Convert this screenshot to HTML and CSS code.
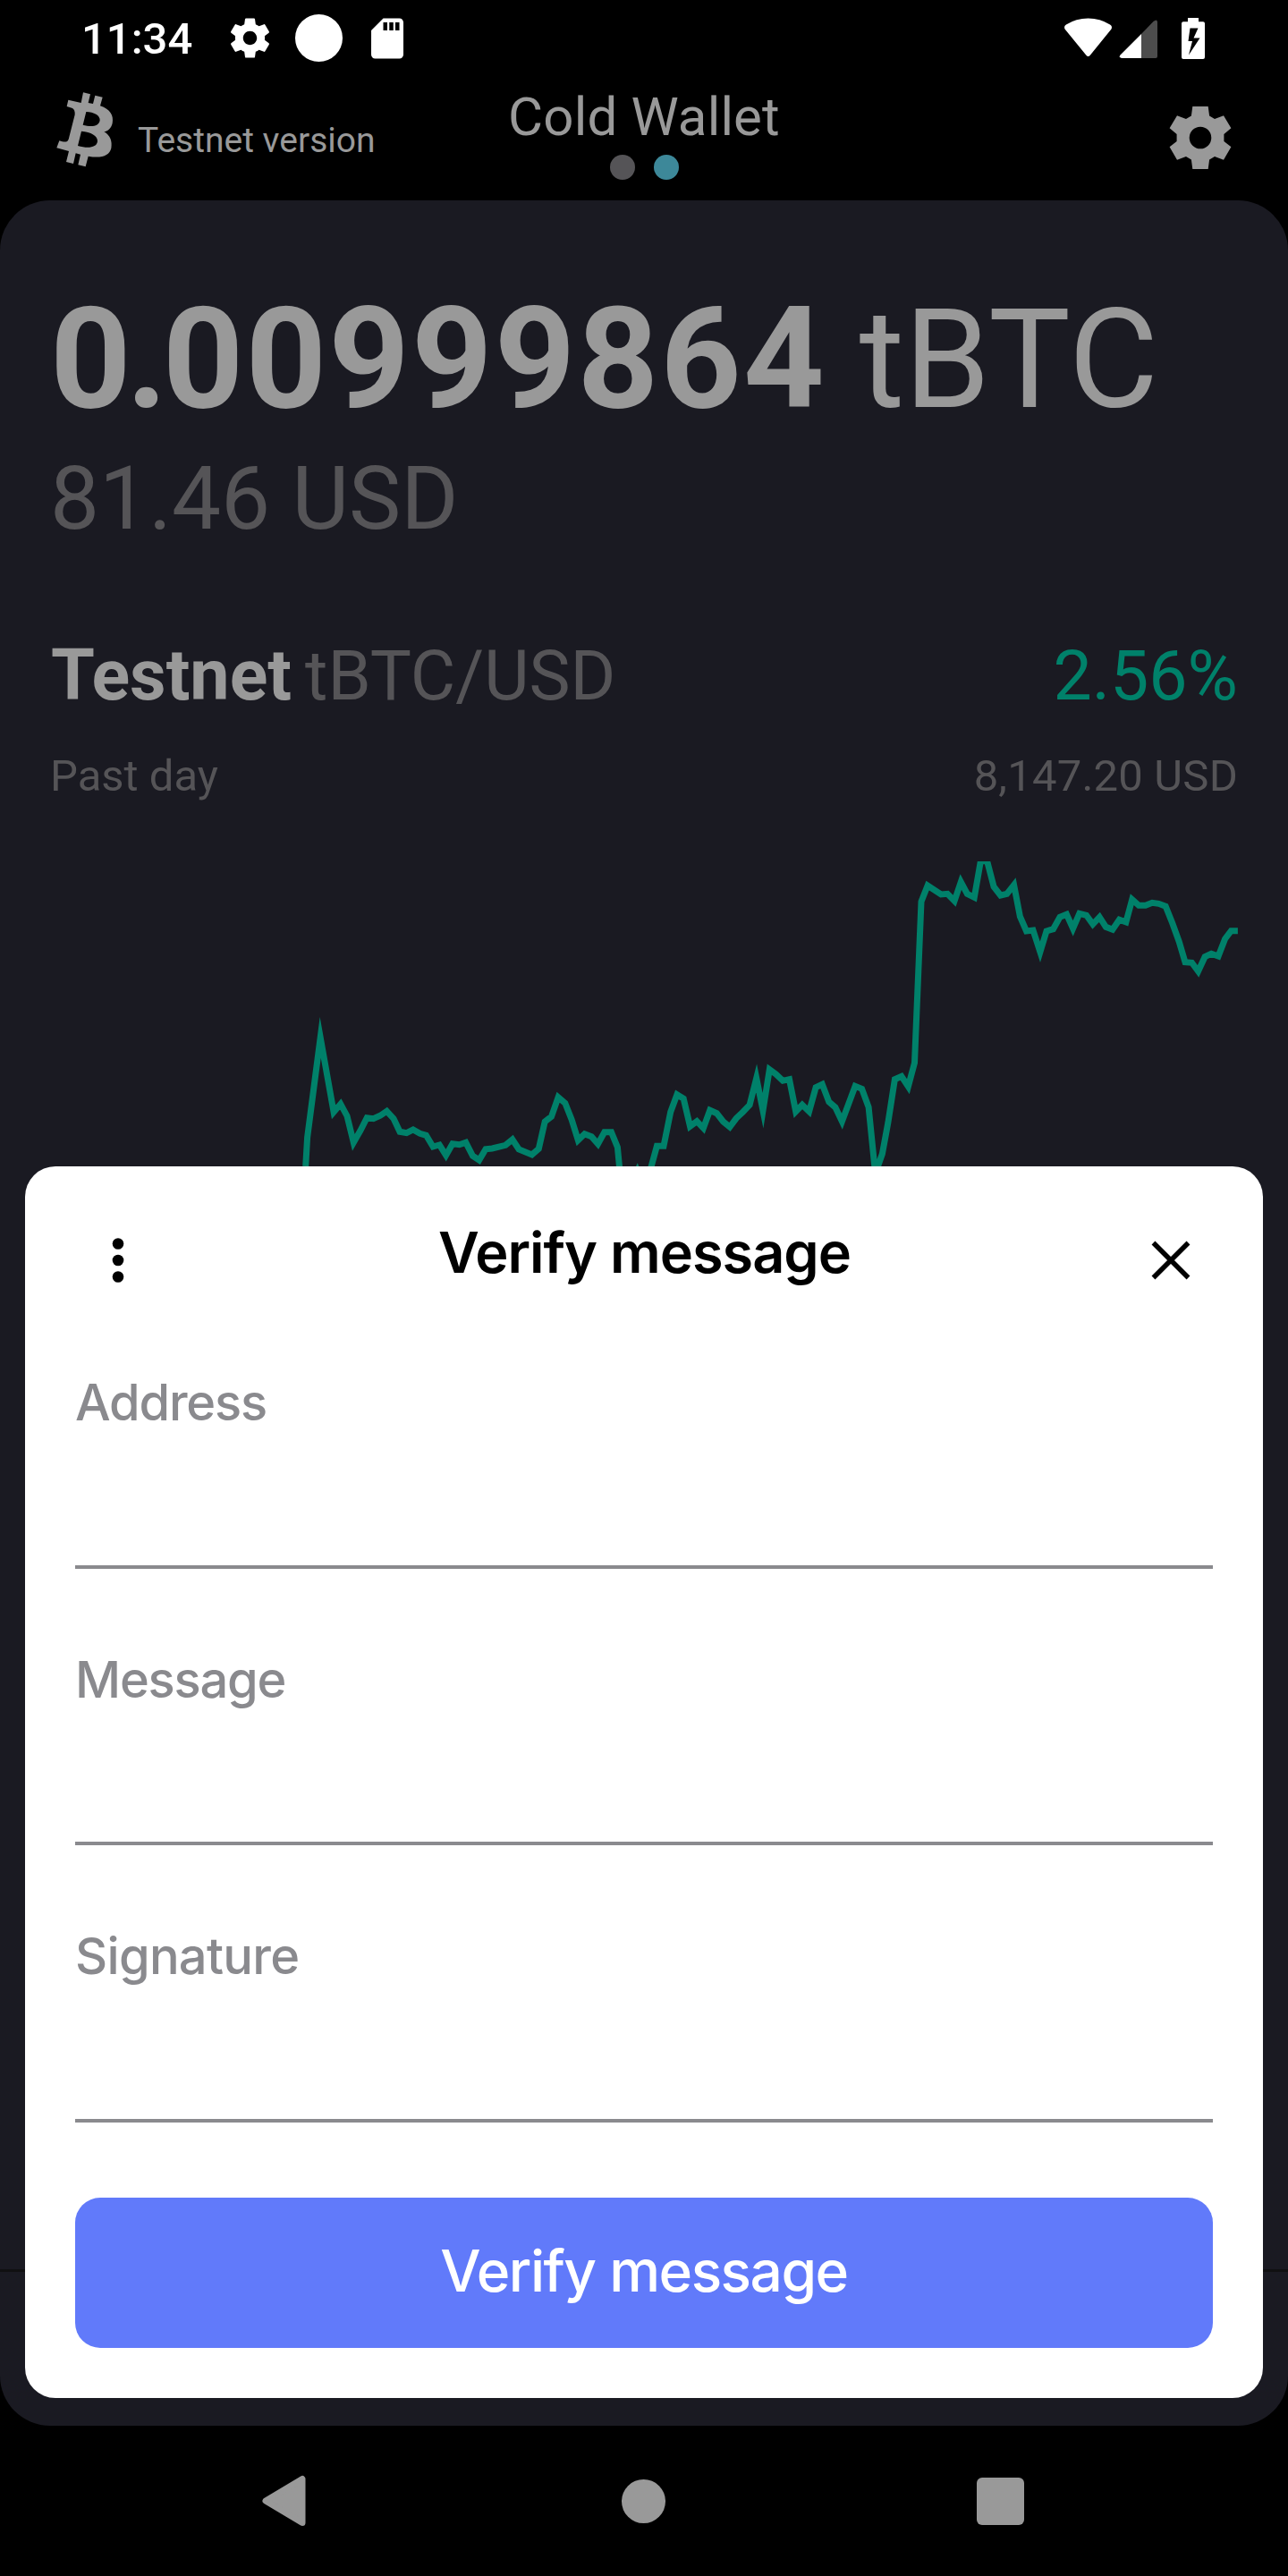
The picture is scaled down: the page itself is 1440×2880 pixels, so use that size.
FILE: index.html
```html
<!DOCTYPE html>
<html lang="en">
<head>
<meta charset="utf-8">
<title>Cold Wallet</title>
<link rel="stylesheet" href="styles.css">
</head>
<body>
<div class="screen">
  <div class="status">
    <span class="clock">11:34</span>
    <svg class="st-gear" viewBox="0 0 24 24"><path d="M19.43 12.98c.04-.32.07-.64.07-.98s-.03-.66-.07-.98l2.11-1.65c.19-.15.24-.42.12-.64l-2-3.46c-.12-.22-.39-.3-.61-.22l-2.49 1c-.52-.4-1.08-.73-1.69-.98l-.38-2.65C14.46 2.18 14.25 2 14 2h-4c-.25 0-.46.18-.49.42l-.38 2.65c-.61.25-1.17.59-1.69.98l-2.49-1c-.23-.09-.49 0-.61.22l-2 3.46c-.13.22-.07.49.12.64l2.11 1.65c-.04.32-.07.65-.07.98s.03.66.07.98l-2.11 1.65c-.19.15-.24.42-.12.64l2 3.46c.12.22.39.3.61.22l2.49-1c.52.4 1.08.73 1.69.98l.38 2.65c.03.24.24.42.49.42h4c.25 0 .46-.18.49-.42l.38-2.65c.61-.25 1.17-.59 1.69-.98l2.49 1c.23.09.49 0 .61-.22l2-3.46c.12-.22.07-.49-.12-.64l-2.11-1.65zM12 15.5c-1.93 0-3.5-1.57-3.5-3.5s1.570-3.5 3.500-3.500 3.500 1.570 3.500 3.500-1.570 3.500-3.500 3.500z"/></svg>
    <span class="st-dot"></span>
    <svg class="st-sd" viewBox="0 0 24 24"><path d="M18 2h-8L4.020 8 4 20c0 1.100.9 2 2 2h12c1.100 0 2-.9 2-2V4c0-1.100-.9-2-2-2zm-6 6h-2V4h2v4zm3 0h-2V4h2v4zm3 0h-2V4h2v4z"/></svg>
    <svg class="st-right" viewBox="1188 15 160 54">
      <path d="M1190.500 31.500Q1189 28.500 1192 26.500Q1203 19.500 1216.600 19.500Q1230 19.500 1241 26.500Q1244 28.500 1242.500 31.500L1219 60.500Q1216.600 63.500 1214.200 60.500Z"/>
      <path class="weak" d="M1276 37L1289.500 23Q1294 19.500 1294 24V62Q1294 64 1292 64H1276Z"/>
      <path d="M1276 37V64H1254Q1250.500 63.500 1252.500 60.500Z"/>
      <path fill-rule="evenodd" d="M1328 19H1340V23.300H1345Q1347 23.300 1347 25.300V63Q1347 65 1345 65H1323Q1321 65 1321 63V25.300Q1321 23.300 1323 23.300H1328ZM1330.500 30.500L1328.500 45H1333L1329 60.500L1341.500 41.500H1334.500L1339.500 30.500Z"/>
    </svg>
  </div>

  <div class="header">
    <div class="brand">
      <svg class="btc" viewBox="0 0 240 300"><path fill-rule="evenodd" d="M114 25L138 31L131 60L147 63L154 35L179 41L171 70C205 81 217 103 212 128C208 145 198 154 184 157C205 169 212 189 208 212C202 237 176 247 131 239L122 274L97 268L105 233L89 229L81 264L57 258L66 222L25 211L34 187L44 190C57 192 62 190 65 182L86 100C87 88 84 80 76 77L59 72L64 50L107 60ZM124 90L113 134C140 142 168 140 170 118C171 102 150 91 124 90ZM108 155L96 204C130 214 160 210 162 189C163 170 140 158 108 155Z"/></svg>
      <span class="network">Testnet version</span>
    </div>
    <div class="heading">
      <div class="title">Cold Wallet</div>
      <div class="pager"><i></i><i class="on"></i></div>
    </div>
    <svg class="settings" viewBox="-42 -42 84 84"><path fill-rule="evenodd" d="M-8.700-35H8.700L10.100-24.500L16-21L26-24.700L34.400-10.700L26.400-4V4L34.400 10.300L26 24.700L16 21L10.100 24.500L8.700 35H-8.700L-10.100 24.500L-16 21L-26 24.700L-34.400 10.300L-26.400 4V-4L-34.400-10.700L-26-24.700L-16-21L-10.100-24.500ZM0-12.300A12.300 12.300 0 1 0 0 12.300A12.300 12.300 0 1 0 0-12.300Z"/></svg>
  </div>

  <div class="panel">
    <div class="balance"><span class="amount"><span class="lead">0.</span>00999864</span><span class="unit">tBTC</span></div>
    <div class="fiat">81.46 USD</div>
    <div class="pair"><span class="name">Testnet</span><span class="ticker">tBTC/USD</span><span class="change">2.56%</span></div>
    <div class="sub"><span>Past day</span><span class="price">8,147.20 USD</span></div>
    <svg class="chart" viewBox="56 963 1328 380"><polyline points="338,1343 341.700,1304 343.600,1271.700 358.200,1160 373.100,1243.300 380.800,1234.300 388,1247.700 395.300,1277.300 402.900,1264 410.200,1249.700 417.500,1250.700 425.100,1247.300 432.400,1242.300 440.100,1250.700 447,1265.300 454.600,1266.700 461.900,1263 469.500,1267.300 476.400,1269.300 484.100,1282 491.300,1280 498.600,1291.700 505.900,1278.700 513.500,1279.700 520.800,1277.300 528.500,1292.300 535.700,1297 543,1284.700 550.300,1284 565.200,1280.300 572.900,1274 580.100,1285 594.700,1291 602.300,1284.300 609.200,1254 616.500,1248.300 624.100,1226.700 631.800,1233.300 639.100,1251.700 646.300,1274.700 653.600,1267.700 661.300,1270.700 668.500,1279 675.800,1265.700 683.500,1265.700 690.400,1282.700 692.700,1306.700 697,1330 705,1325 712.500,1309 720,1328 728.200,1304 734.400,1281.300 742,1281.300 749.700,1243.300 756.900,1223.700 764.200,1228.300 771.500,1259.300 779.100,1253.700 786.400,1261.300 793.700,1241.300 801.300,1244.700 808.600,1254 815.900,1260 823.100,1250.300 830.800,1243 838.100,1235.300 845.700,1205.300 853,1241.700 860.300,1195.700 867.500,1201 875.200,1208.300 882.500,1206.700 889.700,1242.700 896.900,1235.300 904.600,1242.700 912.100,1215.700 919.300,1212.300 926.800,1232 933.900,1238 941.400,1253.700 956.100,1214.300 963.600,1217.300 971.100,1237.700 978.600,1312 986.400,1290 992.900,1255 1000.400,1206.700 1007.900,1203.300 1015.400,1214.700 1022.500,1188.300 1030,1008 1037.100,990 1052.100,1000 1059.300,999.300 1067.100,1007.300 1074.300,986 1081.400,999.300 1089.300,1003.300 1096.400,962.700 1103.600,962.700 1111.100,991.300 1118.600,1001 1125.700,999.300 1133.600,989.300 1140.400,1024.700 1147.500,1041 1155,1040 1162.900,1064.300 1170,1041 1177.500,1038.700 1185,1025.300 1192.500,1022.300 1199.600,1038 1206.800,1021.300 1214.600,1023.300 1221.800,1033.300 1229.300,1025.300 1236.400,1036.300 1243.900,1039.300 1251.400,1028.300 1258.900,1031 1265.700,1005.700 1273.200,1012.300 1280.700,1012.300 1288.200,1009.300 1295.400,1010.300 1303.200,1013.300 1310.700,1032 1318.200,1052.700 1325,1075.700 1332.500,1076.300 1339.600,1086 1347.100,1069.700 1354.300,1066.300 1362.100,1069 1369.600,1049.700 1376.400,1040.700 1383.900,1040.700"/></svg>
    <div class="tabs"></div>
  </div>

  <div class="nav">
    <svg viewBox="0 0 60 60"><path d="M47 5.500V54.500L6 30Z"/></svg>
    <span class="home"></span>
    <span class="recent"></span>
  </div>

  <div class="sheet">
    <div class="sheet-head">
      <svg class="more" viewBox="0 0 44 44"><circle cx="22" cy="3.500" r="6.300"/><circle cx="22" cy="22" r="6.300"/><circle cx="22" cy="40.500" r="6.300"/></svg>
      <div class="sheet-title">Verify message</div>
      <svg class="close" viewBox="0 0 44 44"><path d="M2.500 2.500L41.500 41.500M41.500 2.500L2.500 41.500"/></svg>
    </div>
    <div class="fields">
      <div class="field">Address</div>
      <div class="field">Message</div>
      <div class="field signature">Signature</div>
    </div>
    <div class="button">Verify message</div>
  </div>
</div>
</body>
</html>
```
FILE: styles.css
```css
* { box-sizing: border-box; }
body { margin: 0; background: #000; font-family: Roboto, sans-serif; }
svg { display: block; overflow: visible; flex: none; }
.screen { position: relative; width: 1440px; height: 2880px; display: flex; flex-direction: column; overflow: hidden; white-space: nowrap; }

.status { height: 85px; display: flex; align-items: center; padding: 0 92px 0 91px; color: #fff; fill: #fff; }
.clock { font-size: 49px; font-weight: 500; line-height: 60px; padding-top: 3px; }
.st-gear { width: 53px; height: 53px; margin-left: 38px; }
.st-dot { width: 53px; height: 53px; border-radius: 50%; background: #fff; margin-left: 24px; }
.st-sd { width: 54px; height: 54px; margin-left: 23px; }
.st-right { width: 160px; height: 54px; margin-left: auto; }
.weak { fill: #4d4d4d; }

.header { height: 139px; display: grid; grid-template-columns: 1fr auto 1fr; align-items: start; color: #999; fill: #999; }
.brand { display: flex; align-items: flex-start; padding: 10px 0 0 55px; }
.btc { width: 80px; height: 100px; }
.network { font-size: 39px; line-height: 46px; margin: 39px 0 0 19px; }
.heading { display: flex; flex-direction: column; align-items: center; padding-top: 10px; }
.title { font-size: 60px; line-height: 71px; letter-spacing: .15px; }
.pager { display: flex; gap: 21px; margin: 7px 0 0 2px; }
.pager i { width: 28px; height: 28px; border-radius: 50%; background: #555457; }
.pager .on { background: #3d8899; }
.settings { width: 84px; height: 84px; justify-self: end; margin: 27px 56px 0 0; }

.panel { height: 2488px; background: #1a1a22; border-radius: 56px; padding: 87px 56px 0; display: flex; flex-direction: column; overflow: hidden; color: #555457; }
.balance { display: flex; align-items: baseline; height: 180px; line-height: 180px; color: #999; }
.amount { font-size: 158px; font-weight: 700; letter-spacing: 2.1px; }
.lead { letter-spacing: -5.400px; }
.unit { font-size: 154px; margin-left: 37px; }
.fiat { font-size: 98px; line-height: 110px; margin-top: 12px; }
.pair { display: flex; align-items: baseline; height: 90px; font-size: 77.500px; line-height: 90px; margin-top: 97px; padding-left: 1px; }
.name { font-size: 79px; font-weight: 700; color: #999; }
.ticker { margin-left: 15px; }
.change { margin-left: auto; color: #00816a; font-size: 77px; }
.sub { display: flex; justify-content: space-between; font-size: 49px; line-height: 58px; margin-top: 39px; }
.price { letter-spacing: .2px; }
.chart { width: 1328px; height: 380px; margin-top: 66px; overflow: hidden; flex: none; }
.chart polyline { fill: none; stroke: #00816a; stroke-width: 7; stroke-miterlimit: 20; }
.tabs { margin: auto -56px 0; height: 175px; border-top: 3px solid #101012; flex: none; }

.nav { flex: 1; display: flex; align-items: center; justify-content: space-between; padding: 0 295px 0 291px; fill: #999; }
.nav svg { width: 60px; height: 60px; }
.nav path { stroke: #999; stroke-width: 7; stroke-linejoin: round; }
.home { width: 49px; height: 49px; border-radius: 50%; background: #999; margin-right: 4px; }
.recent { width: 53px; height: 53px; border-radius: 6px; background: #999; }

.sheet { position: absolute; left: 28px; top: 1304px; width: 1384px; height: 1377px; background: #fff; border-radius: 34px; padding: 58px 56px 56px; font-family: Inter, sans-serif; display: flex; flex-direction: column; }
.sheet-head { display: flex; justify-content: space-between; align-items: flex-start; padding: 0 25px 0 26px; height: 76px; color: #000; }
.sheet-title { font-size: 63px; font-weight: 600; line-height: 76px; letter-spacing: -1px; }
.more, .close { width: 44px; height: 44px; margin-top: 25px; }
.close path { stroke: #000; stroke-width: 5.500; }
.fields { display: flex; flex-direction: column; gap: 90px; margin-top: 96px; }
.field { height: 219.500px; border-bottom: 4px solid #8a8a8e; font-size: 56px; font-weight: 500; line-height: 68px; letter-spacing: -1.200px; color: #8a8a8e; }
.signature { letter-spacing: -.700px; }
.button { margin-top: auto; height: 168px; border-radius: 28px; background: #617afa; color: #fff; font-size: 64px; font-weight: 500; letter-spacing: -1.500px; line-height: 164px; text-align: center; }
```
